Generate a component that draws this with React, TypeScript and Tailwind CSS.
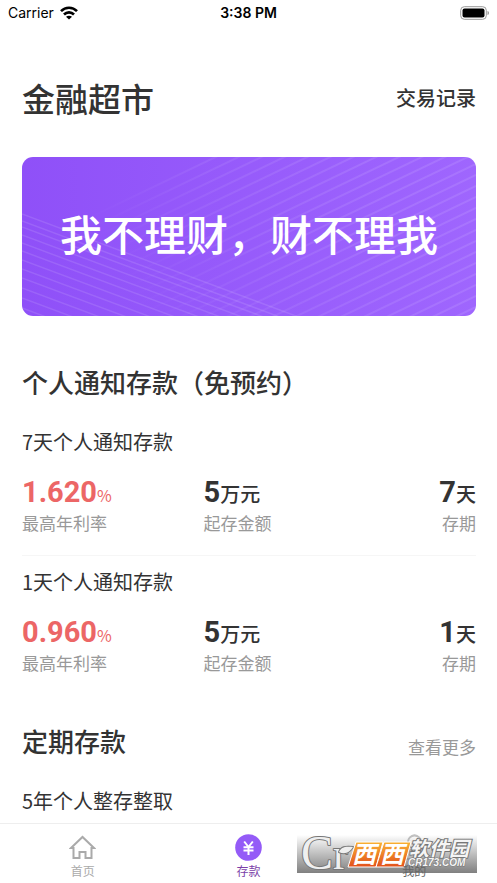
import React from 'react';

interface DepositProduct {
  name: string;
  rate: string;
  amount: string;
  term: string;
}

const noticeDeposits: DepositProduct[] = [
  { name: '7天个人通知存款', rate: '1.620', amount: '5', term: '7' },
  { name: '1天个人通知存款', rate: '0.960', amount: '5', term: '1' },
];

// y positions where the rising and falling banner lines cross the left edge
const risingLines = Array.from({ length: 27 }, (_, i) => 93 + i * 11);
const fallingLines = [57, 64, 70, 78, 86, 94, 103, 112, 121, 131, 141, 151];

const StatusBar: React.FunctionComponent = () => (
  <div className="grid grid-cols-3 items-center h-[26px] px-2 font-['Inter',sans-serif] text-[14px] leading-5 text-black">
    <div className="flex items-center gap-[6px]">
      <span>Carrier</span>
      <svg className="w-[18px] h-[14px]" viewBox="0 0 18 14" aria-hidden="true">
        <g fill="none" stroke="#000" strokeWidth="2.6">
          <path d="M1 5.2C5.4.6 12.600.6 17 5.200" />
          <path d="M4 8.500c2.800-2.900 7.200-2.900 10 0" />
        </g>
        <path d="M9 13.500 6 10.800c1.700-1.500 4.300-1.500 6 0z" />
      </svg>
    </div>
    <span className="text-center font-semibold">3:38 PM</span>
    <svg className="w-[29px] h-[14px] justify-self-end" viewBox="0 0 29 14" aria-hidden="true">
      <rect x="0.700" y="0.700" width="25.600" height="12.600" rx="3.600" fill="none" stroke="#999" />
      <rect x="2.500" y="2.500" width="22" height="9" rx="2" />
      <path d="M27.500 5v4c1-.4 1.500-1.200 1.500-2s-.5-1.600-1.500-2z" fill="#999" />
    </svg>
  </div>
);

const Banner: React.FunctionComponent = () => (
  <div className="relative flex items-center justify-center h-[159px] mt-[34px] rounded-[11px] overflow-hidden bg-linear-to-r from-[#8f50f8] to-[#9f66fe]">
    <svg className="absolute inset-0 w-full h-full" viewBox="0 0 454 159" preserveAspectRatio="none" aria-hidden="true">
      <defs>
        <linearGradient id="rise" gradientUnits="userSpaceOnUse" x1="100" y1="130" x2="340" y2="0">
          <stop offset="0" stopColor="#fff" stopOpacity="0" />
          <stop offset="0.5" stopColor="#fff" stopOpacity="0.07" />
          <stop offset="1" stopColor="#fff" stopOpacity="0.1" />
        </linearGradient>
      </defs>
      {risingLines.map((y) => (
        <path key={y} d={`M0 ${y}L454 ${y - 218}`} stroke="url(#rise)" strokeWidth="2" />
      ))}
      {fallingLines.map((y) => (
        <path key={y} d={`M0 ${y}L290 ${y + 108}`} stroke="#fff" strokeOpacity="0.11" strokeWidth="1.5" />
      ))}
    </svg>
    <p className="relative pb-2 text-[42px] leading-[60px] font-medium text-white whitespace-nowrap">
      我不理财，财不理我
    </p>
  </div>
);

const ProductRow: React.FunctionComponent<{ product: DepositProduct }> = ({ product }) => (
  <li className="pt-3 pb-5 first:pt-0 last:pb-0">
    <h3 className="text-[20px] leading-7">{product.name}</h3>
    <dl className="grid grid-cols-[2fr_2fr_1fr] mt-5">
      <div className="flex flex-col-reverse">
        <dt className="text-[17px] leading-6 text-[#999]">最高年利率</dt>
        <dd className="leading-8 text-[#ec6666]">
          <span className="font-['Roboto',sans-serif] text-[29px] font-bold">{product.rate}</span>
          <span className="text-[16px]">%</span>
        </dd>
      </div>
      <div className="flex flex-col-reverse">
        <dt className="text-[17px] leading-6 text-[#999]">起存金额</dt>
        <dd className="leading-8">
          <span className="font-['Roboto',sans-serif] text-[29px] font-bold">{product.amount}</span>
          <span className="text-[20px] font-medium">万元</span>
        </dd>
      </div>
      <div className="flex flex-col-reverse text-right">
        <dt className="text-[17px] leading-6 text-[#999]">存期</dt>
        <dd className="leading-8">
          <span className="font-['Roboto',sans-serif] text-[29px] font-bold">{product.term}</span>
          <span className="text-[20px] font-medium">天</span>
        </dd>
      </div>
    </dl>
  </li>
);

const Watermark: React.FunctionComponent = () => (
  <div className="absolute right-5 top-[11px] w-[180px] h-[38px] bg-linear-to-b from-white/40 to-[#808080] pointer-events-none">
    <svg className="w-full h-full overflow-visible" viewBox="0 0 180 38" aria-hidden="true">
      <defs>
        <linearGradient id="orange" x1="0" y1="0" x2="0" y2="1">
          <stop offset="0" stopColor="#f9b233" />
          <stop offset="1" stopColor="#e2501c" />
        </linearGradient>
      </defs>
      <g fontFamily="Liberation Serif, serif" fill="#efefef" stroke="#777" strokeWidth="2" strokeLinejoin="round" paintOrder="stroke">
        <text x="4" y="34" fontSize="48">C</text>
        <text x="36" y="34" fontSize="44">r</text>
        <path d="M42 17c2-5 6-6 14-5-3 5-8 8-14 5z" />
      </g>
      <g fill="url(#orange)" stroke="#fff" strokeWidth="1">
        <path d="M59 7h27l-7 25H51z" />
        <path d="M87 7h27l-7 25H79z" />
      </g>
      <g fontFamily="Noto Sans CJK SC, sans-serif" fontWeight="700" fontStyle="italic">
        <text x="55" y="28" fontSize="24" fill="#fff">西</text>
        <text x="83" y="28" fontSize="24" fill="#fff">西</text>
        <text x="112" y="21" fontSize="20" fill="#f5f5f5" stroke="#777" strokeWidth="2" paintOrder="stroke">软件园</text>
      </g>
      <text x="111" y="31" fontSize="10" fontFamily="Liberation Sans, sans-serif" fontWeight="700" fontStyle="italic" fill="#f5f5f5" stroke="#777" strokeWidth="1" paintOrder="stroke">
        CR173.COM
      </text>
    </svg>
  </div>
);

const TabBar: React.FunctionComponent = () => (
  <nav className="sticky bottom-0 mt-auto grid grid-cols-3 h-[60px] shrink-0 border-t border-[#eee] bg-white text-[12px] leading-4">
    <a href="#home" className="flex flex-col items-center gap-[2px] pt-[10px] text-[#aaa]">
      <svg className="w-[27px] h-[27px]" viewBox="0 0 27 27" fill="none" stroke="currentColor" strokeWidth="2" aria-hidden="true">
        <path d="M4.500 14H2L13.500 3 25 14h-2.500M4.500 13v11h6v-6h6v6h6V13" />
      </svg>
      首页
    </a>
    <a href="#deposit" className="flex flex-col items-center gap-[2px] pt-[10px] text-[#7b3fa8]">
      <svg className="w-[27px] h-[27px]" viewBox="0 0 27 27" aria-hidden="true">
        <circle cx="13.500" cy="13.500" r="13.300" fill="#945bf7" />
        <path d="m9.200 7.500 4.300 5.500 4.300-5.500M8.500 13.200h10M8.500 16.600h10M13.500 13v8" fill="none" stroke="#fff" strokeWidth="2" />
      </svg>
      存款
    </a>
    <a href="#mine" className="flex flex-col items-center gap-[2px] pt-[10px] text-[#999]">
      <svg className="w-[27px] h-[27px]" viewBox="0 0 27 27" fill="none" stroke="currentColor" strokeWidth="2" aria-hidden="true">
        <circle cx="13.500" cy="8" r="6.500" />
        <path d="M3 25c0-13 21-13 21 0z" />
      </svg>
      <span className="relative z-10 text-[#666]">我的</span>
    </a>
    <Watermark />
  </nav>
);

const App: React.FunctionComponent = () => (
  <div className="flex flex-col min-h-screen bg-white font-['Noto_Sans_CJK_SC',sans-serif] text-[#333]">
    <StatusBar />
    <main className="pl-[22px] pr-[21px] pt-[47px]">
      <header className="flex items-center justify-between">
        <h1 className="text-[33px] leading-[50px] font-medium">金融超市</h1>
        <a href="#records" className="text-[20px] leading-7 font-medium">交易记录</a>
      </header>
      <Banner />
      <section className="mt-12">
        <h2 className="text-[26px] leading-9 font-medium">个人通知存款（免预约）</h2>
        <ul className="mt-7 divide-y divide-[#f6f6f6]">
          {noticeDeposits.map((product) => (
            <ProductRow key={product.name} product={product} />
          ))}
        </ul>
      </section>
      <section className="mt-12">
        <div className="flex items-end justify-between">
          <h2 className="text-[26px] leading-9 font-medium">定期存款</h2>
          <a href="#more" className="text-[17px] leading-6 text-[#999]">查看更多</a>
        </div>
        <h3 className="mt-7 text-[20px] leading-7">5年个人整存整取</h3>
      </section>
    </main>
    <TabBar />
  </div>
);

export default App;
